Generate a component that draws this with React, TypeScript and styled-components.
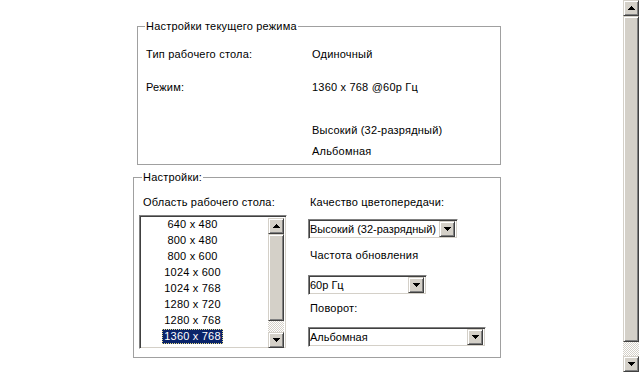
import React from 'react';
import styled, { createGlobalStyle } from 'styled-components';

const Global = createGlobalStyle`
  html, body { margin: 0; padding: 0; background: #fff; }
  body {
    font-family: "Liberation Sans", Arial, sans-serif;
    font-size: 11px;
    line-height: 13px;
    letter-spacing: 0.2px;
    color: #000;
  }
  #root { width: 639px; height: 372px; overflow: hidden; }
`;

const FACE = '#d4d0c8';

const Page = styled.div`
  display: flex;
  width: 639px;
  height: 372px;
`;

const Main = styled.div`
  flex: 1;
  display: flex;
  flex-direction: column;
  padding-top: 19px;
`;

const Group = styled.fieldset<{ $left: number; $top: number; $width: number }>`
  margin: ${(p) => p.$top}px 0 0 ${(p) => p.$left}px;
  width: ${(p) => p.$width}px;
  box-sizing: border-box;
  border: 1px solid #a0a0a0;
  padding: 0;
  min-width: 0;
`;

const Legend = styled.legend<{ $offset: number }>`
  margin-left: ${(p) => p.$offset}px;
  padding: 0 1px;
  line-height: 14px;
`;

const InfoGrid = styled.div`
  display: flex;
  flex-direction: column;
  padding: 0 0 6px 8px;
`;

const InfoRow = styled.div<{ $gap: number }>`
  display: grid;
  grid-template-columns: 166px 1fr;
  margin-top: ${(p) => p.$gap}px;
`;

const Columns = styled.div`
  display: flex;
  padding: 12px 0 8px 5px;
`;

const LeftCol = styled.div`
  width: 169px;
  display: flex;
  flex-direction: column;
`;

const RightCol = styled.div`
  display: flex;
  flex-direction: column;
  align-items: flex-start;
`;

const Label = styled.div<{ $indent: number; $gap?: number }>`
  margin-left: ${(p) => p.$indent}px;
  margin-top: ${(p) => p.$gap ?? 0}px;
`;

const Sunken = styled.div`
  box-sizing: border-box;
  border: 1px solid;
  border-color: #808080 #fff #fff #808080;
  box-shadow: inset 1px 1px #404040, inset -1px -1px ${FACE};
  background: #fff;
`;

const ListBox = styled(Sunken)`
  margin-top: 6px;
  width: 148px;
  height: 134px;
  padding: 2px;
  display: flex;
`;

const Items = styled.div`
  flex: 1;
  display: flex;
  flex-direction: column;
`;

const Item = styled.div`
  box-sizing: border-box;
  width: 101px;
  height: 16px;
  padding-bottom: 3px;
  display: flex;
  align-items: center;
  justify-content: center;
`;

const ItemText = styled.span<{ $selected?: boolean }>`
  padding: 0 1px;
  line-height: 13px;
  border: 1px dotted ${(p) => (p.$selected ? '#e8dc88' : 'transparent')};
  background: ${(p) => (p.$selected ? '#0a246a' : 'transparent')};
  color: ${(p) => (p.$selected ? '#fff' : '#000')};
`;

const ScrollBar = styled.div`
  width: 16px;
  display: flex;
  flex-direction: column;
  flex-shrink: 0;
`;

const Raised = styled.div<{ $h?: number }>`
  box-sizing: border-box;
  width: 16px;
  height: ${(p) => (p.$h ? `${p.$h}px` : '16px')};
  flex-shrink: 0;
  background: ${FACE};
  border: 1px solid;
  border-color: ${FACE} #404040 #404040 ${FACE};
  box-shadow: inset 1px 1px #fff, inset -1px -1px #808080;
  display: flex;
  align-items: center;
  justify-content: center;
`;

const Track = styled.div<{ $h: number }>`
  height: ${(p) => p.$h}px;
  flex-shrink: 0;
  background: repeating-conic-gradient(${FACE} 0 25%, #fff 0 50%) 0 0 / 2px 2px;
`;

const PageScroll = styled(ScrollBar)`
  height: 372px;
`;

const Select = styled(Sunken)<{ $w: number; $gap: number }>`
  width: ${(p) => p.$w}px;
  height: 20px;
  margin-top: ${(p) => p.$gap}px;
  padding: 2px 2px 2px 1px;
  display: flex;
  align-items: center;
`;

const SelectValue = styled.div`
  flex: 1;
  letter-spacing: 0;
  white-space: nowrap;
  overflow: hidden;
`;

const Arrow = ({ up }: { up?: boolean }) => (
  <svg width="7" height="4" viewBox="0 0 7 4" shapeRendering="crispEdges">
    {up ? (
      <g fill="#000">
        <rect x="3" y="0" width="1" height="1" />
        <rect x="2" y="1" width="3" height="1" />
        <rect x="1" y="2" width="5" height="1" />
        <rect x="0" y="3" width="7" height="1" />
      </g>
    ) : (
      <g fill="#000">
        <rect x="0" y="0" width="7" height="1" />
        <rect x="1" y="1" width="5" height="1" />
        <rect x="2" y="2" width="3" height="1" />
        <rect x="3" y="3" width="1" height="1" />
      </g>
    )}
  </svg>
);

const modes = [
  '640 x 480',
  '800 x 480',
  '800 x 600',
  '1024 x 600',
  '1024 x 768',
  '1280 x 720',
  '1280 x 768',
  '1360 x 768',
];

export default function App() {
  return (
    <Page>
      <Global />
      <Main>
        <Group $left={137} $top={0} $width={364}>
          <Legend $offset={7}>Настройки текущего режима</Legend>
          <InfoGrid>
            <InfoRow $gap={15}>
              <span>Тип рабочего стола:</span>
              <span>Одиночный</span>
            </InfoRow>
            <InfoRow $gap={20}>
              <span>Режим:</span>
              <span>1360 x 768 @60p Гц</span>
            </InfoRow>
            <InfoRow $gap={30}>
              <span />
              <span>Высокий (32-разрядный)</span>
            </InfoRow>
            <InfoRow $gap={8}>
              <span />
              <span>Альбомная</span>
            </InfoRow>
          </InfoGrid>
        </Group>
        <Group $left={133} $top={5} $width={368}>
          <Legend $offset={8}>Настройки:</Legend>
          <Columns>
            <LeftCol>
              <Label $indent={4}>Область рабочего стола:</Label>
              <ListBox>
                <Items>
                  {modes.map((m, i) => (
                    <Item key={m}>
                      <ItemText $selected={i === modes.length - 1}>{m}</ItemText>
                    </Item>
                  ))}
                </Items>
                <ScrollBar>
                  <Raised>
                    <Arrow up />
                  </Raised>
                  <Raised $h={87} />
                  <Track $h={11} />
                  <Raised>
                    <Arrow />
                  </Raised>
                </ScrollBar>
              </ListBox>
            </LeftCol>
            <RightCol>
              <Label $indent={2}>Качество цветопередачи:</Label>
              <Select $w={150} $gap={10}>
                <SelectValue>Высокий (32-разрядный)</SelectValue>
                <Raised>
                  <Arrow />
                </Raised>
              </Select>
              <Label $indent={2} $gap={10}>Частота обновления</Label>
              <Select $w={119} $gap={13}>
                <SelectValue>60p Гц</SelectValue>
                <Raised>
                  <Arrow />
                </Raised>
              </Select>
              <Label $indent={2} $gap={7}>Поворот:</Label>
              <Select $w={178} $gap={12}>
                <SelectValue>Альбомная</SelectValue>
                <Raised>
                  <Arrow />
                </Raised>
              </Select>
            </RightCol>
          </Columns>
        </Group>
      </Main>
      <PageScroll>
        <Raised>
          <Arrow up />
        </Raised>
        <Raised $h={326} />
        <Track $h={14} />
        <Raised>
          <Arrow />
        </Raised>
      </PageScroll>
    </Page>
  );
}
